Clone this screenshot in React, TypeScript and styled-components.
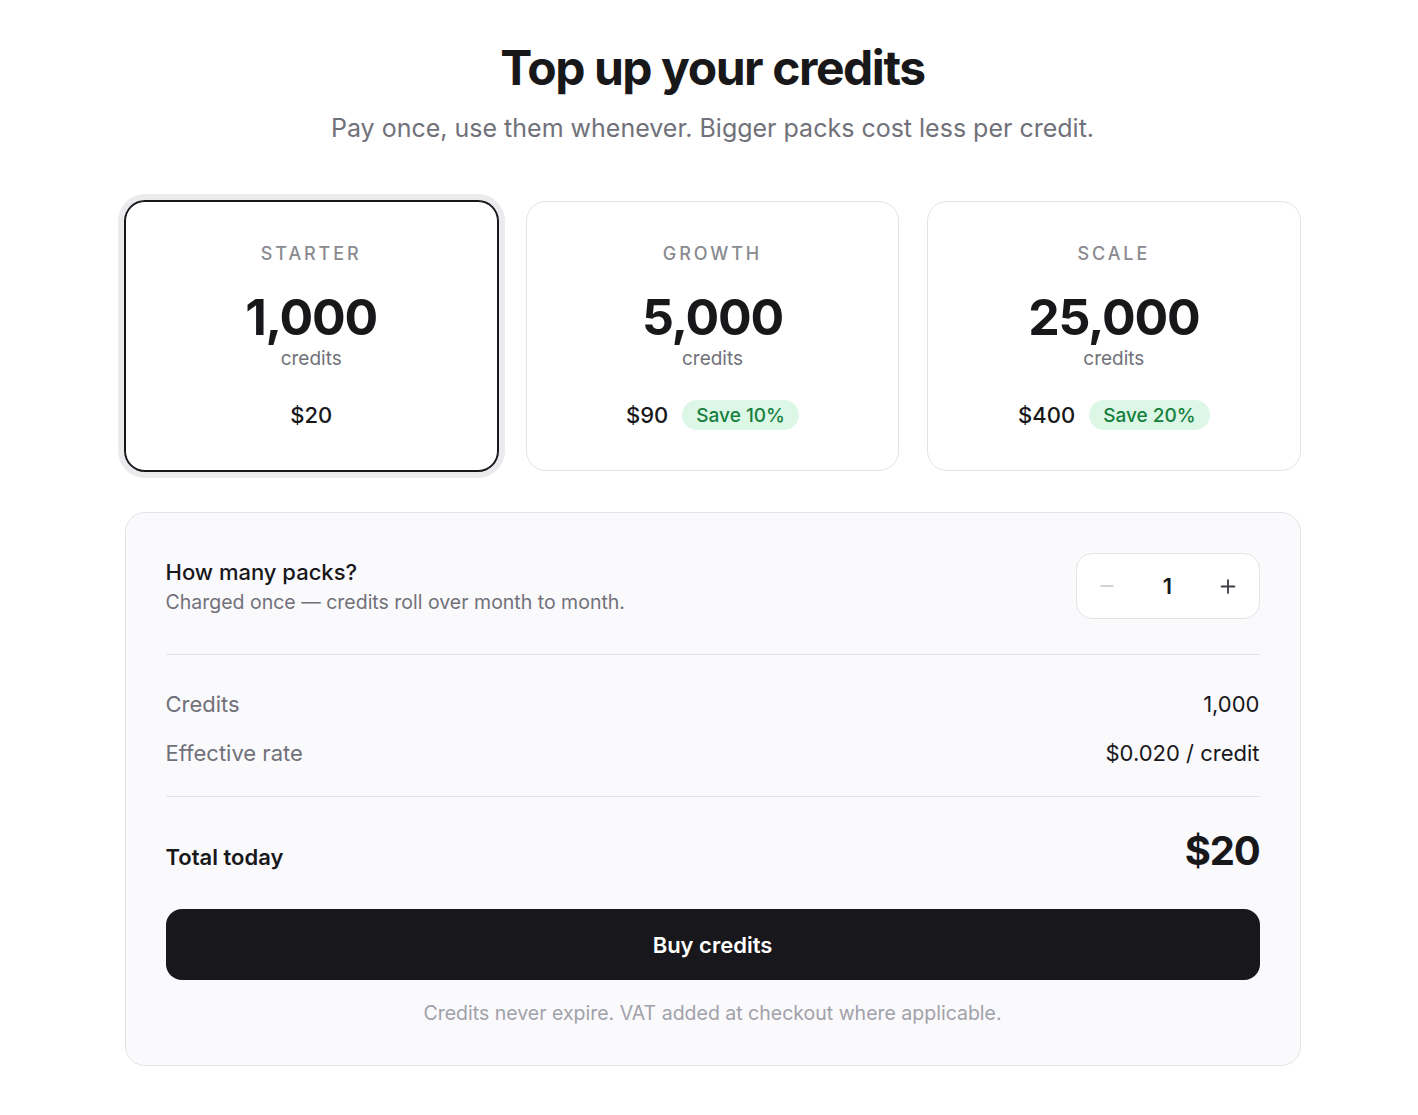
import { useState } from 'react';
import styled, { createGlobalStyle } from 'styled-components';

const GlobalStyle = createGlobalStyle`
  body {
    margin: 0;
    background: #ffffff;
    font-family: Inter, "Noto Sans", sans-serif;
    color: #18181b;
    -webkit-font-smoothing: antialiased;
  }
`;

const Page = styled.main`
  width: 1176px;
  margin: 0 auto;
  padding: 39px 0 48px 7px;
`;

const Title = styled.h1`
  margin: 0;
  font-size: 48px;
  line-height: 58px;
  font-weight: 700;
  letter-spacing: -0.03em;
  text-align: center;
`;

const Subtitle = styled.p`
  margin: 14px 0 0;
  font-size: 25px;
  line-height: 34px;
  color: #71717a;
  text-align: center;
`;

const Packs = styled.div`
  display: grid;
  grid-template-columns: repeat(3, 1fr);
  gap: 28px;
  margin-top: 56px;
`;

const PackCard = styled.button<{ $active: boolean }>`
  height: 270px;
  padding: 40px 0 0;
  display: flex;
  flex-direction: column;
  align-items: center;
  border: 1px solid ${(p) => (p.$active ? '#18181b' : '#e4e4e7')};
  border-radius: 20px;
  background: #ffffff;
  font-family: inherit;
  color: inherit;
  cursor: pointer;
  box-shadow: ${(p) => (p.$active ? '0 0 0 1px #18181b, 0 0 0 7px #ebebee' : 'none')};
`;

const PackName = styled.div`
  font-size: 18px;
  line-height: 24px;
  font-weight: 500;
  letter-spacing: 0.16em;
  color: #8a8a8f;
`;

const PackAmount = styled.div`
  margin-top: 21px;
  font-size: 50px;
  line-height: 60px;
  font-weight: 700;
  letter-spacing: -0.025em;
`;

const PackUnit = styled.div`
  font-size: 19px;
  line-height: 24px;
  color: #71717a;
`;

const PriceRow = styled.div`
  margin-top: 29px;
  height: 30px;
  display: flex;
  align-items: center;
  gap: 14px;
`;

const Price = styled.span`
  font-size: 22px;
  font-weight: 500;
`;

const SaveBadge = styled.span`
  height: 30px;
  padding: 0 14px;
  display: inline-flex;
  align-items: center;
  border-radius: 999px;
  background: #ddf7e7;
  color: #15803d;
  font-size: 19px;
  font-weight: 500;
`;

const Panel = styled.section`
  margin-top: 41px;
  padding: 40px;
  border: 1px solid #e4e4e7;
  border-radius: 20px;
  background: #faf9fb;
`;

const QtyRow = styled.div`
  display: flex;
  align-items: center;
  justify-content: space-between;
`;

const QtyTitle = styled.div`
  font-size: 22px;
  line-height: 28px;
  font-weight: 500;
`;

const QtyHint = styled.div`
  margin-top: 3px;
  font-size: 19.5px;
  line-height: 26px;
  color: #71717a;
`;

const Stepper = styled.div`
  width: 184px;
  height: 66px;
  box-sizing: border-box;
  display: grid;
  grid-template-columns: 1fr 1fr 1fr;
  align-items: center;
  border: 1px solid #e4e4e7;
  border-radius: 16px;
  background: #ffffff;
`;

const StepButton = styled.button<{ $muted?: boolean }>`
  height: 100%;
  padding: 0;
  border: 0;
  background: transparent;
  display: flex;
  align-items: center;
  justify-content: center;
  color: ${(p) => (p.$muted ? '#c4c4c8' : '#3f3f46')};
  cursor: pointer;
`;

const StepValue = styled.span`
  text-align: center;
  font-size: 22px;
  font-weight: 600;
`;

const Divider = styled.hr<{ $gap?: number }>`
  margin: ${(p) => p.$gap ?? 0}px 0 0;
  border: 0;
  border-top: 1px solid #e4e4e7;
`;

const Summary = styled.div`
  display: flex;
  flex-direction: column;
  gap: 19px;
  padding: 34px 0 28px;
`;

const SummaryRow = styled.div`
  display: flex;
  justify-content: space-between;
  font-size: 22px;
  line-height: 30px;
`;

const SummaryLabel = styled.span`
  color: #71717a;
`;

const TotalRow = styled.div`
  margin-top: 30px;
  display: flex;
  align-items: baseline;
  justify-content: space-between;
`;

const TotalLabel = styled.span`
  font-size: 22px;
  font-weight: 600;
`;

const TotalValue = styled.span`
  font-size: 40px;
  line-height: 48px;
  font-weight: 700;
  letter-spacing: -0.03em;
`;

const BuyButton = styled.button`
  width: 100%;
  height: 71px;
  margin-top: 34px;
  border: 0;
  border-radius: 16px;
  background: #18171b;
  color: #ffffff;
  font-family: inherit;
  font-size: 22px;
  font-weight: 600;
  cursor: pointer;
`;

const Note = styled.p`
  margin: 21px 0 0;
  font-size: 19.5px;
  line-height: 24px;
  color: #a1a1aa;
  text-align: center;
`;

const packs = [
  { name: 'STARTER', credits: 1000, price: 20, save: null },
  { name: 'GROWTH', credits: 5000, price: 90, save: 10 },
  { name: 'SCALE', credits: 25000, price: 400, save: 20 },
];

const Minus = () => (
  <svg width="20" height="20" viewBox="0 0 24 24" fill="none" stroke="currentColor" strokeWidth="2" strokeLinecap="round">
    <path d="M5 12h14" />
  </svg>
);

const Plus = () => (
  <svg width="22" height="22" viewBox="0 0 24 24" fill="none" stroke="currentColor" strokeWidth="2" strokeLinecap="round">
    <path d="M5 12.5h14M12 5.5v14" />
  </svg>
);

export default function App() {
  const [selected, setSelected] = useState(0);
  const [qty, setQty] = useState(1);

  const pack = packs[selected];
  const credits = pack.credits * qty;
  const total = pack.price * qty;
  const rate = pack.price / pack.credits;

  return (
    <>
      <GlobalStyle />
      <Page>
        <Title>Top up your credits</Title>
        <Subtitle>Pay once, use them whenever. Bigger packs cost less per credit.</Subtitle>

        <Packs>
          {packs.map((p, i) => (
            <PackCard key={p.name} $active={i === selected} onClick={() => setSelected(i)}>
              <PackName>{p.name}</PackName>
              <PackAmount>{p.credits.toLocaleString('en-US')}</PackAmount>
              <PackUnit>credits</PackUnit>
              <PriceRow>
                <Price>${p.price}</Price>
                {p.save && <SaveBadge>Save {p.save}%</SaveBadge>}
              </PriceRow>
            </PackCard>
          ))}
        </Packs>

        <Panel>
          <QtyRow>
            <div>
              <QtyTitle>How many packs?</QtyTitle>
              <QtyHint>Charged once — credits roll over month to month.</QtyHint>
            </div>
            <Stepper>
              <StepButton $muted={qty <= 1} onClick={() => setQty(Math.max(1, qty - 1))}>
                <Minus />
              </StepButton>
              <StepValue>{qty}</StepValue>
              <StepButton onClick={() => setQty(qty + 1)}>
                <Plus />
              </StepButton>
            </Stepper>
          </QtyRow>

          <Divider $gap={35} />

          <Summary>
            <SummaryRow>
              <SummaryLabel>Credits</SummaryLabel>
              <span>{credits.toLocaleString('en-US')}</span>
            </SummaryRow>
            <SummaryRow>
              <SummaryLabel>Effective rate</SummaryLabel>
              <span>${rate.toFixed(3)} / credit</span>
            </SummaryRow>
          </Summary>

          <Divider />

          <TotalRow>
            <TotalLabel>Total today</TotalLabel>
            <TotalValue>${total.toLocaleString('en-US')}</TotalValue>
          </TotalRow>

          <BuyButton>Buy credits</BuyButton>
          <Note>Credits never expire. VAT added at checkout where applicable.</Note>
        </Panel>
      </Page>
    </>
  );
}
